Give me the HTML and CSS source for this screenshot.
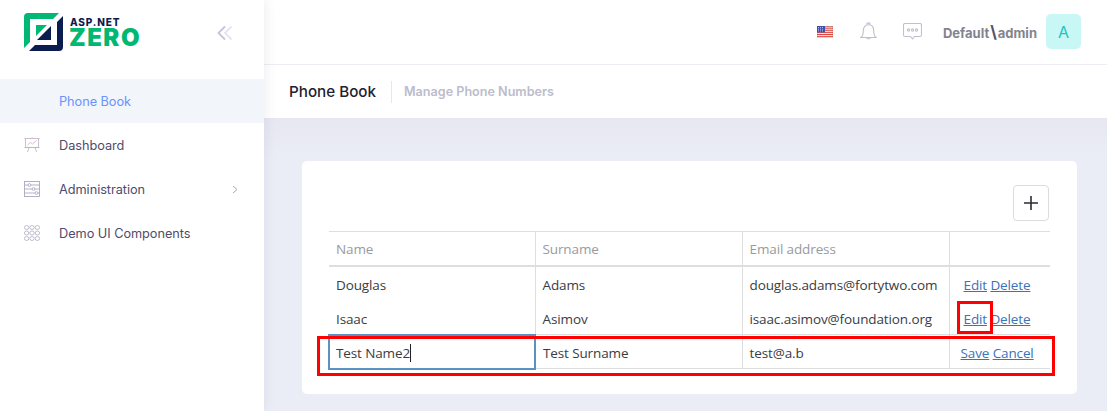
FILE: index.html
```html
<!DOCTYPE html>
<html lang="en">
<head>
<meta charset="utf-8">
<title>Phone Book</title>
<link rel="stylesheet" href="styles.css">
</head>
<body>
<div class="app">
  <aside class="sidebar">
    <div class="brand">
      <svg class="logo-mark" width="39" height="38" viewBox="0 0 39 38">
        <path d="M4 0H35L29 6H6V29L0 35V4Q0 0 4 0Z" fill="#00b873"/>
        <path d="M39 3V34Q39 38 35 38H5L11 32H33V9Z" fill="#0b1c4f"/>
        <path d="M12 12H23L12 23Z" fill="#00b873"/>
        <path d="M27 13V27H13Z" fill="#0b1c4f"/>
      </svg>
      <div class="logo-text">
        <span class="logo-top">ASP.NET</span>
        <span class="logo-bottom">ZERO</span>
      </div>
      <svg class="collapse" width="16" height="16" viewBox="0 0 16 16" fill="none" stroke-width="1.8">
        <path d="M8 1.5L1.5 8L8 14.5" stroke="#c3c5dc"/>
        <path d="M14.5 1.5L8 8L14.5 14.5" stroke="#e3e4ef"/>
      </svg>
    </div>
    <nav class="menu">
      <a class="menu-item active"><span class="menu-icon"></span>Phone Book</a>
      <a class="menu-item">
        <svg class="menu-icon" width="16" height="16" viewBox="0 0 16 16" fill="none" stroke="#b5b3c8" stroke-width=".8">
          <path d="M.5 1.500H15.500M1.500 1.500V10.500H14.500V1.500M.5 10.500H15.500M5 10.500L3.500 15M11 10.500L12.500 15M8 .5V1.500"/>
          <path d="M3.500 8L6.500 5.500L8.500 7L12.500 3.500" stroke="#e0a9a9"/>
        </svg>Dashboard</a>
      <a class="menu-item">
        <svg class="menu-icon" width="16" height="16" viewBox="0 0 16 16" fill="none" stroke="#aaa8c2" stroke-width=".9">
          <rect x=".5" y=".5" width="15" height="15"/>
          <path d="M.5 4H4M7 4H15.500M.5 8H8M11 8H15.500M.5 12H11M14 12H15.500"/>
          <circle cx="5.500" cy="4" r="1.400"/><circle cx="9.500" cy="8" r="1.400"/><circle cx="12.500" cy="12" r="1.400"/>
        </svg>Administration<svg class="chevron" width="6" height="9" viewBox="0 0 6 9" fill="none" stroke="#a8a9b8" stroke-width="1"><path d="M1 1L5 4.500L1 8"/></svg></a>
      <a class="menu-item">
        <svg class="menu-icon" width="16" height="16" viewBox="0 0 16 16" fill="none" stroke="#b8b6ca" stroke-width=".9">
          <ellipse cx="2.600" cy="2.500" rx="2.200" ry="2"/><ellipse cx="8" cy="2.500" rx="2.200" ry="2"/><ellipse cx="13.400" cy="2.500" rx="2.200" ry="2"/>
          <ellipse cx="2.600" cy="8" rx="2.200" ry="2"/><ellipse cx="8" cy="8" rx="2.200" ry="2"/><ellipse cx="13.400" cy="8" rx="2.200" ry="2"/>
          <ellipse cx="2.600" cy="13.500" rx="2.200" ry="2"/><ellipse cx="8" cy="13.500" rx="2.200" ry="2"/><ellipse cx="13.400" cy="13.500" rx="2.200" ry="2"/>
        </svg>Demo UI Components</a>
    </nav>
  </aside>
  <div class="main">
    <header class="topbar">
      <svg class="flag" width="16" height="12" viewBox="0 0 16 12">
        <rect width="16" height="12" fill="#f4f4f8"/>
        <path d="M0 .9H16M0 2.800H16M0 4.700H16M0 6.600H16M0 8.500H16M0 10.400H16" stroke="#e0483e" stroke-width="1"/>
        <rect width="8" height="6.400" fill="#3d4fb0"/>
        <path d="M1 1.500H7M1 3.200H7M1 4.900H7" stroke="#dfe3f5" stroke-width=".7" stroke-dasharray="1 1"/>
        <rect x=".25" y=".25" width="15.500" height="11.500" fill="none" stroke="#555" stroke-opacity=".35" stroke-width=".5"/>
      </svg>
      <svg class="bell" width="17" height="19" viewBox="0 0 17 19" fill="none" stroke="#bfbfd0" stroke-width="1.100">
        <path d="M1 15.500C3 14 3.300 11 3.300 8.500C3.300 5 5.500 2.800 8.500 2.800C11.500 2.800 13.700 5 13.700 8.500C13.700 11 14 14 16 15.500Z"/>
        <path d="M7 2.800V1.500Q8.500 .2 10 1.500V2.800M6 15.500Q8.500 18.500 11 15.500"/>
      </svg>
      <svg class="chat" width="19" height="17" viewBox="0 0 19 17" fill="none" stroke="#bfbfd0" stroke-width="1.100">
        <path d="M2 .5H17Q18.500 .5 18.500 2V12Q18.500 13.500 17 13.500H11.500L9.500 15.800L7.500 13.500H2Q.5 13.500 .5 12V2Q.5 .5 2 .5Z"/>
        <circle cx="5.500" cy="7" r="1.100"/><circle cx="9.500" cy="7" r="1.100"/><circle cx="13.500" cy="7" r="1.100"/>
      </svg>
      <span class="user">Default<span class="sep">\</span>admin</span>
      <span class="avatar">A</span>
    </header>
    <section class="subheader">
      <h1 class="page-title">Phone Book</h1>
      <span class="page-desc">Manage Phone Numbers</span>
    </section>
    <main class="content">
      <div class="card">
        <div class="toolbar">
          <button class="add-btn" aria-label="Add">
            <svg width="14" height="14" viewBox="0 0 14 14" stroke="#2b2b33" stroke-width="1.6"><path d="M7 0V14M0 7H14"/></svg>
          </button>
        </div>
        <div class="table-wrap">
          <table class="grid">
            <colgroup><col class="c1"><col class="c2"><col class="c3"><col class="c4"></colgroup>
            <thead>
              <tr><th>Name</th><th>Surname</th><th>Email address</th><th></th></tr>
            </thead>
            <tbody>
              <tr class="r1">
                <td>Douglas</td><td>Adams</td><td>douglas.adams@fortytwo.com</td>
                <td class="actions a-view"><a>Edit</a> <a>Delete</a></td>
              </tr>
              <tr class="r2">
                <td>Isaac</td><td>Asimov</td><td>isaac.asimov@foundation.org</td>
                <td class="actions a-view"><a>Edit</a> <a>Delete</a></td>
              </tr>
              <tr class="r3">
                <td class="focused">Test Name2<span class="caret"></span></td><td>Test Surname</td><td>test@a.b</td>
                <td class="actions a-edit"><a>Save</a> <a>Cancel</a></td>
              </tr>
            </tbody>
          </table>
          <div class="mark mark-edit"></div>
          <div class="mark mark-row"></div>
        </div>
      </div>
    </main>
  </div>
</div>
</body>
</html>
```

FILE: styles.css
```css
* { box-sizing: border-box; }
html, body { margin: 0; height: 411px; overflow: hidden; background: #fff; }
body { font-family: "Open Sans", "Liberation Sans", sans-serif; }
.app { display: flex; height: 411px; }

.sidebar { width: 264px; flex: none; background: #fff; box-shadow: 0 0 12px rgba(80, 80, 130, .12); position: relative; z-index: 2; }
.brand { height: 79px; display: flex; align-items: flex-start; padding: 13px 0 0 24px; }
.logo-mark { flex: none; }
.logo-text { display: flex; flex-direction: column; margin-left: 6px; font-family: Inter, sans-serif; line-height: 1; width: 72px; flex: none; }
.logo-top { font-size: 10px; line-height: 10px; font-weight: 800; color: #0b1c4f; letter-spacing: .85px; margin-top: 4px; margin-left: 1px; }
.logo-bottom { font-size: 24px; line-height: 22px; font-weight: 900; color: #00b873; margin-top: 0; letter-spacing: 1.5px; }
.collapse { margin: 12px 0 0 76px; }

.menu-item { height: 44px; display: flex; align-items: center; padding-left: 24px; font-family: Inter, sans-serif; font-size: 12.750px; letter-spacing: -.05px; color: #4f4c6c; }
.menu-item.active { background: #f2f5f9; color: #6a93ff; }
.menu-icon { width: 16px; height: 16px; flex: none; margin-right: 19px; }
.chevron { margin-left: auto; margin-right: 26px; }

.main { flex: 1; min-width: 0; display: flex; flex-direction: column; }
.topbar { height: 65px; flex: none; display: flex; align-items: center; background: #fff; border-bottom: 1px solid #eceef5; padding: 0 26px 1px 0; justify-content: flex-end; }
.flag { margin-right: 27px; }
.bell { margin-right: 26px; }
.chat { margin-right: 21px; }
.user { font-family: Inter, sans-serif; font-weight: 700; font-size: 13px; color: #83838f; margin-right: 9px; }
.sep { font-size: 17px; color: #555562; margin: 0 1px; }
.avatar { width: 35px; height: 35px; border-radius: 5px; background: #c9f7f5; color: #1bc5bd; font-family: Inter, sans-serif; font-size: 16px; display: flex; align-items: center; justify-content: center; }

.subheader { height: 53px; flex: none; background: #fff; display: flex; align-items: center; padding-left: 25px; }
.page-title { margin: 0; font-family: Inter, sans-serif; font-size: 15.200px; font-weight: 500; color: #212130; padding-right: 15px; line-height: 22px; border-right: 1px solid #e6e7ee; }
.page-desc { font-family: Inter, sans-serif; font-size: 12.600px; font-weight: 600; color: #bcbccb; margin-left: 12px; }

.content { flex: 1; background: linear-gradient(#e6e7f1, #ebedf6 40px); padding: 43px 30px 0 38px; }
.card { height: 233px; background: #fff; border-radius: 5px; padding: 24px 28px 0 27px; }
.toolbar { display: flex; justify-content: flex-end; height: 46px; }
.add-btn { width: 36px; height: 36px; padding: 0; display: flex; align-items: center; justify-content: center; background: #fff; border: 1px solid #dcdce0; border-radius: 4px; }

.table-wrap { position: relative; margin-left: -1px; }
.grid { width: 721px; table-layout: fixed; border-collapse: collapse; font-size: 13.500px; letter-spacing: -.12px; color: #3a3c42; }
.c1 { width: 206px; } .c2 { width: 207px; } .c3 { width: 207px; } .c4 { width: 101px; }
.grid th { height: 34px; font-weight: 400; text-align: left; color: #9a9a9e; padding: 1px 6px 0 7px; border-top: 1px solid #dedede; border-bottom: 2px solid #dedede; border-right: 1px solid #dedede; }
.grid th:last-child, .grid td:last-child { border-right: 0; }
.grid td { padding: 0 6px 0 7px; border-right: 1px solid #dedede; white-space: nowrap; }
.r1 td { height: 35px; padding-top: 3px; }
.r2 td { height: 34px; padding-top: 3px; }
.r3 td { height: 34px; padding-top: 3px; border-top: 1px solid #dedede; border-bottom: 1px solid #dedede; }
.grid td.focused { border: 2px solid #5b92c4; padding-left: 6px; }
.caret { display: inline-block; width: 1px; height: 18px; background: #222; vertical-align: -4px; }
.actions a { color: #3b72b8; text-decoration: underline; }
.grid td.a-view { padding-left: 14px; }
.grid td.a-edit { padding-left: 11px; }

.mark { position: absolute; border: 3px solid #f00; }
.mark-edit { left: 629px; top: 70px; width: 36px; height: 33px; }
.mark-row { left: -11px; top: 105px; width: 738px; height: 40px; }
```
